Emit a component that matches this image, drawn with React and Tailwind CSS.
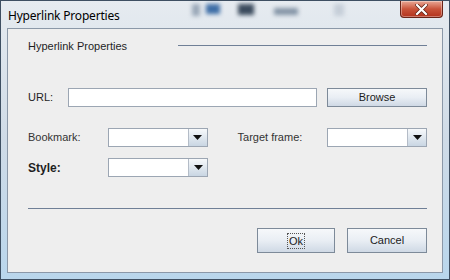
import React from "react";

const font = { fontFamily: '"Liberation Sans", Arial, sans-serif' };

function ComboBox() {
  return (
    <div className="flex h-[19px] w-[100px] border border-[#9ca6b3] bg-white">
      <div className="flex-1 bg-white" />
      <div className="flex w-[19px] items-center justify-center border-l border-[#b4bcc7] bg-gradient-to-b from-[#f7f9fb] to-[#c9d6e3]">
        <svg width="9" height="5" viewBox="0 0 9 5">
          <path d="M0 0 H9 L4.5 5 Z" fill="#111" />
        </svg>
      </div>
    </div>
  );
}

function Button({ children, className = "", focus = false }) {
  return (
    <div
      className={
        "flex items-center justify-center border border-[#7d8a99] bg-gradient-to-b from-[#f6f8fa] via-[#e9eef4] to-[#cfd9e5] text-[11px] text-[#1c1c1c] " +
        className
      }
    >
      {focus ? (
        <span className="border border-dotted border-[#555] px-[1px] leading-[14px]">{children}</span>
      ) : (
        children
      )}
    </div>
  );
}

export default function App() {
  return (
    <div
      className="relative flex h-[280px] w-[450px] flex-col overflow-hidden border border-[#3e4f62] bg-gradient-to-b from-[#e6ebf0] via-[#cfdbe7] to-[#b9d6ec] px-[6px] pb-[6px]"
      style={font}
    >
      <div className="flex h-[27px] items-start">
        <div className="ml-[1px] mt-[6px] w-[112px] whitespace-nowrap text-[12px] text-black" style={{ fontFamily: '"Noto Sans", "Liberation Sans", sans-serif', letterSpacing: "-0.2px" }}>
          Hyperlink Properties
        </div>
        <div className="ml-[72px] mt-[3px] flex items-start gap-[6px] blur-[2px]">
          <div className="h-[12px] w-[8px] bg-[#9aa8b8]" />
          <div className="h-[10px] w-[14px] bg-[#3d6da6]" />
          <div className="ml-[12px] h-[11px] w-[16px] bg-[#3b4b5d]" />
          <div className="ml-[14px] mt-[4px] h-[7px] w-[24px] bg-[#8494a6]" />
          <div className="ml-[30px] h-[12px] w-[10px] bg-[#c5ced8]" />
        </div>
        <div className="flex-1" />
        <div className="flex h-[17px] w-[43px] items-center justify-center rounded-b-[4px] border border-t-0 border-[#6a2418] bg-gradient-to-b from-[#e9a896] via-[#c9533a] to-[#b2321c] shadow-[inset_0_0_0_1px_rgba(255,255,255,0.35)]">
          <svg width="13" height="11" viewBox="0 0 13 11">
            <path d="M2 1 L11 10 M11 1 L2 10" stroke="#5a1e12" strokeWidth="3.6" strokeLinecap="square" />
            <path d="M2 1 L11 10 M11 1 L2 10" stroke="#ffffff" strokeWidth="2.2" strokeLinecap="square" />
          </svg>
        </div>
      </div>

      <div className="flex flex-1 flex-col border border-[#8b98a8] bg-[#eeeeee] pl-[20px] pr-[15px] text-[11px] text-[#1e1e1e]">
        <div className="mt-[10px] flex h-[14px] items-start">
          <div className="w-[150px] leading-[14px]">Hyperlink Properties</div>
          <div className="mt-[6px] h-px flex-1 bg-[#6f7f96]" />
        </div>

        <div className="mt-[35px] flex h-[19px] items-center">
          <div className="w-[40px]">URL:</div>
          <div className="h-[19px] w-[249px] border border-[#9ca6b3] bg-white" />
          <div className="flex-1" />
          <Button className="h-[19px] w-[100px]">Browse</Button>
        </div>

        <div className="mt-[21px] flex h-[19px] items-center">
          <div className="w-[80px] text-[#333]">Bookmark:</div>
          <ComboBox />
          <div className="ml-[30px] w-[90px] text-[#333]">Target frame:</div>
          <ComboBox />
        </div>

        <div className="mt-[11px] flex h-[19px] items-center">
          <div className="w-[80px] text-[12px] font-bold">Style:</div>
          <ComboBox />
        </div>

        <div className="mt-[31px] h-px bg-[#6f7f96]" />

        <div className="mt-[19px] flex justify-end gap-[12px]">
          <Button className="h-[25px] w-[78px]" focus>
            Ok
          </Button>
          <Button className="h-[25px] w-[80px]">Cancel</Button>
        </div>
      </div>
    </div>
  );
}
